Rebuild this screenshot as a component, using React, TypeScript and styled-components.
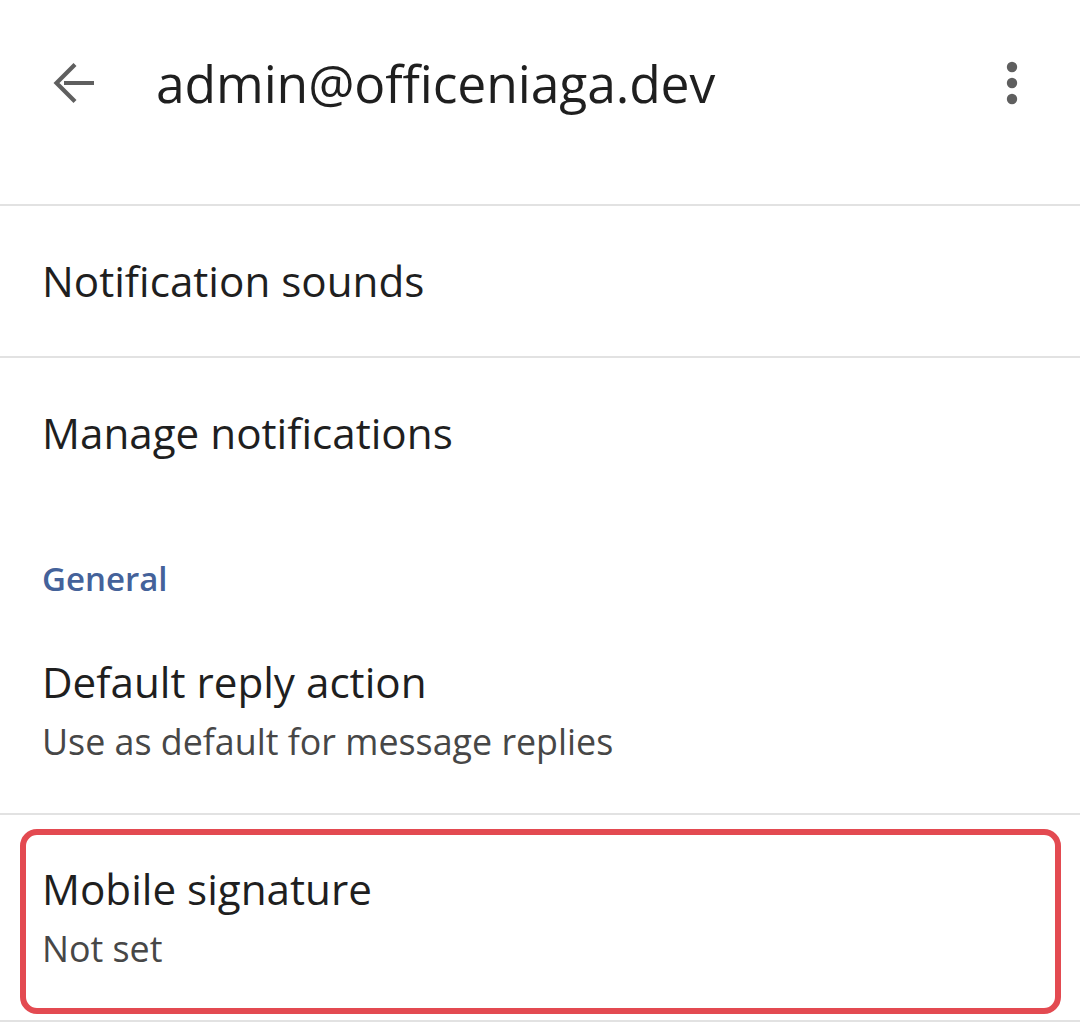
import React from "react";
import styled, { createGlobalStyle } from "styled-components";

const GlobalStyle = createGlobalStyle`
  html, body {
    margin: 0;
    padding: 0;
    background: #ffffff;
  }
  body {
    font-family: "Open Sans", "Noto Sans", Arial, sans-serif;
    color: #1f1f1f;
  }
`;

const Page = styled.div`
  width: 1080px;
  background: #ffffff;
  display: flex;
  flex-direction: column;
`;

const Header = styled.header`
  display: flex;
  align-items: center;
  height: 166px;
  padding: 0 0 38px 0;
  border-bottom: 2px solid #e2e2e2;
`;

const IconButton = styled.button`
  width: 60px;
  height: 60px;
  border: none;
  background: transparent;
  padding: 0;
  display: flex;
  align-items: center;
  justify-content: center;
  color: #5f5f5f;
  cursor: pointer;
`;

const BackButton = styled(IconButton)`
  margin-left: 44px;
`;

const MenuButton = styled(IconButton)`
  margin-left: auto;
  margin-right: 38px;
`;

const Title = styled.h1`
  margin: 0 0 0 52px;
  font-family: "Open Sans", "Noto Sans", Arial, sans-serif;
  font-weight: 400;
  font-size: 51.6px;
  line-height: 60px;
  color: #1f1f1f;
  letter-spacing: -0.1px;
`;

const Row = styled.div<{ $divider?: boolean }>`
  position: relative;
  display: flex;
  flex-direction: column;
  justify-content: center;
  padding: 0 42px;
  border-bottom: ${(p) => (p.$divider ? "2px solid #e2e2e2" : "none")};
`;

const SingleRow = styled(Row)`
  height: 150px;
`;

const TwoLineRow = styled(Row)`
  padding-top: 44px;
  padding-bottom: 43px;
`;

const RowTitle = styled.div`
  font-size: 42.2px;
  line-height: 60px;
  font-weight: 400;
  color: #1f1f1f;
`;

const RowSubtitle = styled.div`
  font-size: 35.8px;
  line-height: 58px;
  font-weight: 400;
  color: #474747;
`;

const SectionHeader = styled.div`
  padding: 51px 42px 9px;
  font-size: 33px;
  line-height: 40px;
  font-weight: 600;
  color: #44629a;
`;

const Highlight = styled.div`
  position: absolute;
  top: 14px;
  bottom: 6px;
  left: 20px;
  right: 19px;
  border: 6px solid #e34a51;
  border-radius: 17px;
  pointer-events: none;
`;

const BackIcon = () => (
  <svg width="44" height="44" viewBox="0 0 44 44" fill="none">
    <path
      d="M42 22H12M23 3.5L4.5 22L23 40.5"
      stroke="#5f5f5f"
      strokeWidth="4.2"
      strokeLinecap="butt"
      strokeLinejoin="miter"
    />
  </svg>
);

const MoreIcon = () => (
  <svg width="20" height="50" viewBox="0 0 20 50">
    <circle cx="10" cy="9" r="5.2" fill="#5f5f5f" />
    <circle cx="10" cy="25" r="5.2" fill="#5f5f5f" />
    <circle cx="10" cy="41" r="5.2" fill="#5f5f5f" />
  </svg>
);

export default function App() {
  return (
    <>
      <GlobalStyle />
      <Page>
        <Header>
          <BackButton aria-label="Back">
            <BackIcon />
          </BackButton>
          <Title>admin@officeniaga.dev</Title>
          <MenuButton aria-label="More options">
            <MoreIcon />
          </MenuButton>
        </Header>
        <SingleRow $divider>
          <RowTitle>Notification sounds</RowTitle>
        </SingleRow>
        <SingleRow>
          <RowTitle>Manage notifications</RowTitle>
        </SingleRow>
        <SectionHeader>General</SectionHeader>
        <TwoLineRow $divider>
          <RowTitle>Default reply action</RowTitle>
          <RowSubtitle>Use as default for message replies</RowSubtitle>
        </TwoLineRow>
        <TwoLineRow $divider>
          <Highlight />
          <RowTitle>Mobile signature</RowTitle>
          <RowSubtitle>Not set</RowSubtitle>
        </TwoLineRow>
      </Page>
    </>
  );
}
